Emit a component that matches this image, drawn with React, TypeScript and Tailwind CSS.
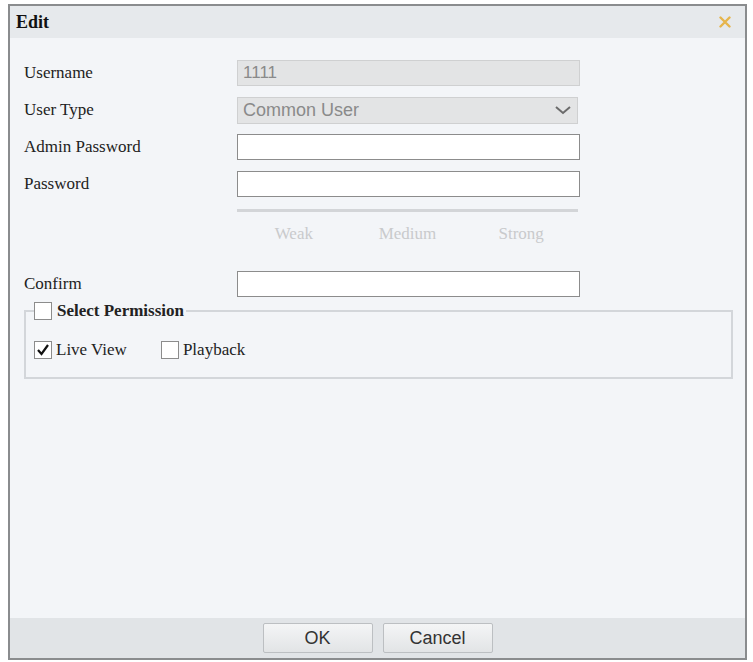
export default function App() {
  const serif = "font-['Liberation_Serif','Times_New_Roman',serif]";
  const sans = "font-['Liberation_Sans',Arial,sans-serif]";

  return (
    <div className="w-[753px] h-[662px] bg-white pt-[4px] pl-[8px]">
      <div className="w-[739px] h-[656px] border-2 border-[#8a8c8e] flex flex-col bg-[#f3f5f8]">
        {/* title */}
        <div className="h-[32px] shrink-0 bg-[#e6e9ec] flex items-center justify-between pl-[6px] pr-[14px]">
          <span className={`${serif} text-[18px] font-bold text-[#111]`}>Edit</span>
          <svg width="12" height="12" viewBox="0 0 12 12">
            <path d="M1.5 1.5 L10.5 10.5 M10.5 1.5 L1.5 10.5" stroke="#e6b54c" strokeWidth="2.4" strokeLinecap="round" />
          </svg>
        </div>

        {/* body */}
        <div className={`flex-1 pt-[22px] pl-[14px] ${serif} text-[17px] text-[#222]`}>
          <div className="flex flex-col gap-[11px]">
            <div className="flex items-center h-[26px]">
              <span className="w-[213px]">Username</span>
              <div className={`w-[343px] h-[26px] bg-[#e3e4e5] border border-[#cfd0d1] flex items-center pl-[5px] ${sans} text-[17px] text-[#8a8a8a]`}>
                1111
              </div>
            </div>
            <div className="flex items-center h-[26px]">
              <span className="w-[213px]">User Type</span>
              <div className={`w-[341px] h-[27px] bg-[#e3e4e5] border border-[#cfd0d1] flex items-center justify-between pl-[5px] pr-[5px] ${sans} text-[18px] text-[#8a8a8a]`}>
                <span>Common User</span>
                <svg width="18" height="10" viewBox="0 0 18 10">
                  <polyline points="2,2 9,8 16,2" fill="none" stroke="#6b6b6b" strokeWidth="2" />
                </svg>
              </div>
            </div>
            <div className="flex items-center h-[26px]">
              <span className="w-[213px]">Admin Password</span>
              <div className="w-[343px] h-[26px] bg-white border border-[#8c8c8c]" />
            </div>
            <div className="flex items-center h-[26px]">
              <span className="w-[213px]">Password</span>
              <div className="w-[343px] h-[26px] bg-white border border-[#8c8c8c]" />
            </div>
          </div>

          {/* strength */}
          <div className="ml-[213px] mt-[12px] w-[341px]">
            <div className="h-[3px] bg-[#d3d5d8]" />
            <div className="grid grid-cols-3 mt-[12px] text-[#c9cacc] text-center leading-[20px]">
              <span>Weak</span>
              <span>Medium</span>
              <span>Strong</span>
            </div>
          </div>

          <div className="flex items-center h-[26px] mt-[27px]">
            <span className="w-[213px]">Confirm</span>
            <div className="w-[343px] h-[26px] bg-white border border-[#8c8c8c]" />
          </div>

          {/* permissions */}
          <fieldset className="mt-[4px] w-[709px] h-[78px] border-2 border-[#d3d6da] pl-[8px]">
            <legend className="pr-[2px] flex items-center gap-[5px] h-[20px]">
              <span className="w-[18px] h-[18px] bg-white border border-[#8c8c8c]" />
              <span className="font-bold">Select Permission</span>
            </legend>
            <div className="flex items-center mt-[19px] h-[20px]">
              <span className="w-[18px] h-[18px] bg-white border border-[#8c8c8c] flex items-center justify-center">
                <svg width="14" height="14" viewBox="0 0 14 14">
                  <polyline points="2,7 5.5,11 12,2" fill="none" stroke="#111" strokeWidth="2.2" />
                </svg>
              </span>
              <span className="ml-[4px]">Live View</span>
              <span className="ml-[34px] w-[18px] h-[18px] bg-white border border-[#8c8c8c]" />
              <span className="ml-[4px]">Playback</span>
            </div>
          </fieldset>
        </div>

        {/* footer */}
        <div className="h-[40px] shrink-0 bg-[#e1e4e7] flex items-center justify-center gap-[10px]">
          <button className={`w-[110px] h-[30px] rounded-[2px] border border-[#bcbfc2] bg-gradient-to-b from-[#f4f5f6] to-[#e2e4e6] ${sans} text-[18px] text-[#333]`}>
            OK
          </button>
          <button className={`w-[110px] h-[30px] rounded-[2px] border border-[#bcbfc2] bg-gradient-to-b from-[#f4f5f6] to-[#e2e4e6] ${sans} text-[18px] text-[#333]`}>
            Cancel
          </button>
        </div>
      </div>
    </div>
  );
}
